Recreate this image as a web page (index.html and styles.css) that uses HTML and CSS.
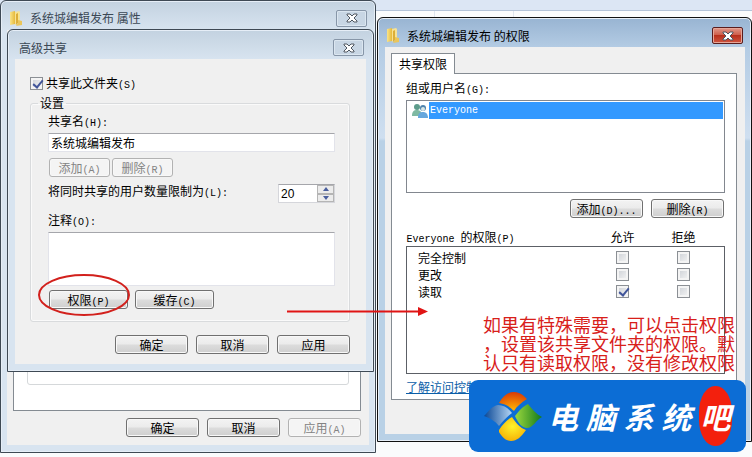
FILE: index.html
```html
<!DOCTYPE html>
<html lang="zh-CN">
<head>
    <meta charset="UTF-8">
    <meta name="viewport" content="width=device-width, initial-scale=1.0">
    <title>高级共享</title>
    <link rel="stylesheet" href="styles.css">
</head>
<body>

    <svg width="0" height="0" class="defs">
        <defs>
            <linearGradient id="gold" x1="0" x2="1"><stop offset="0" stop-color="#f9e48a"/><stop offset="1" stop-color="#e6b93a"/></linearGradient>
            <symbol id="folder" viewBox="0 0 13 15">
                <path d="M0 1l5-1v13l-5 1z" fill="url(#gold)"/>
                <path d="M5 1l4-1 1 1v9l-5 4z" fill="#f6e294"/>
                <path d="M6 3l2-1v10l-2 2z" fill="#dcae38"/>
                <path d="M8 9l4 1v4l-6 1 2-3z" fill="#ebc65a"/>
            </symbol>
            <symbol id="cross" viewBox="0 0 12 10">
                <path d="M1 1h3l2 2 2-2h3v1L8 5l3 3v1H8L6 7 4 9H1V8l3-3-3-3z" fill="#fff" stroke="#4e5660" stroke-width="1"/>
            </symbol>
        </defs>
    </svg>

    <div class="desktop">
        <div class="explorer"></div>
        <div class="columns"></div>

        <!-- properties window -->
        <section class="window props">
            <header class="titlebar">
                <svg class="folder"><use href="#folder"/></svg>
                <h1>系统城编辑发布 属性</h1>
                <button class="close" aria-label="关闭"><svg><use href="#cross"/></svg></button>
            </header>
            <div class="client">
                <div class="sheet"><div class="sheet-group"></div></div>
                <div class="actions">
                    <button class="btn">确定</button>
                    <button class="btn">取消</button>
                    <button class="btn" disabled>应用<span class="key">(A)</span></button>
                </div>
            </div>
        </section>

        <!-- advanced sharing -->
        <section class="window sharing">
            <header class="titlebar">
                <h1>高级共享</h1>
                <button class="close" aria-label="关闭"><svg><use href="#cross"/></svg></button>
            </header>
            <div class="client">
                <label class="share-check"><input type="checkbox" checked><span>共享此文件夹<span class="key">(S)</span></span></label>
                <fieldset>
                    <legend>设置</legend>
                    <label for="shareName">共享名<span class="key">(H):</span></label>
                    <input type="text" id="shareName" value="系统城编辑发布">
                    <div class="row small">
                        <button class="btn" disabled>添加<span class="key">(A)</span></button>
                        <button class="btn" disabled>删除<span class="key">(R)</span></button>
                    </div>
                    <div class="limit">
                        <label for="limit">将同时共享的用户数量限制为<span class="key">(L):</span></label>
                        <div class="spin">
                            <input type="text" id="limit" value="20">
                            <div class="arrows">
                                <button aria-label="增加"><svg viewBox="0 0 6 4"><path d="M0 4l3-4 3 4z"/></svg></button>
                                <button aria-label="减少"><svg viewBox="0 0 6 4"><path d="M0 0h6L3 4z"/></svg></button>
                            </div>
                        </div>
                    </div>
                    <label for="note">注释<span class="key">(O):</span></label>
                    <textarea id="note"></textarea>
                    <div class="row">
                        <button class="btn">权限<span class="key">(P)</span></button>
                        <button class="btn">缓存<span class="key">(C)</span></button>
                    </div>
                </fieldset>
                <div class="actions">
                    <button class="btn">确定</button>
                    <button class="btn">取消</button>
                    <button class="btn">应用</button>
                </div>
            </div>
        </section>

        <!-- permissions -->
        <section class="window perms">
            <header class="titlebar">
                <svg class="folder"><use href="#folder"/></svg>
                <h1>系统城编辑发布 的权限</h1>
                <button class="close" aria-label="关闭"><svg><use href="#cross"/></svg></button>
            </header>
            <div class="client">
                <button class="tab">共享权限</button>
                <div class="panel">
                    <p>组或用户名<span class="key">(G):</span></p>
                    <ul class="users">
                        <li>
                            <svg viewBox="0 0 16 16">
                                <circle cx="5" cy="4" r="3" fill="#5d9c8b"/>
                                <path d="M0 13c0-5 2-6 5-6s5 2 5 6z" fill="#7fb9a2"/>
                                <circle cx="11" cy="5" r="3" fill="#4d82ad"/>
                                <circle cx="11" cy="6" r="2" fill="#d8e6e4"/>
                                <path d="M6 15c0-5 2-6 5-6s5 2 5 6z" fill="#66a7dd"/>
                            </svg>
                            <span class="key">Everyone</span>
                        </li>
                    </ul>
                    <div class="actions">
                        <button class="btn">添加<span class="key">(D)...</span></button>
                        <button class="btn">删除<span class="key">(R)</span></button>
                    </div>
                    <table>
                        <thead>
                            <tr><th><span class="key">Everyone </span>的权限<span class="key">(P)</span></th><th>允许</th><th>拒绝</th></tr>
                        </thead>
                        <tbody>
                            <tr>
                                <td>完全控制</td>
                                <td><input type="checkbox" aria-label="完全控制 允许"></td>
                                <td><input type="checkbox" aria-label="完全控制 拒绝"></td>
                            </tr>
                            <tr>
                                <td>更改</td>
                                <td><input type="checkbox" aria-label="更改 允许"></td>
                                <td><input type="checkbox" aria-label="更改 拒绝"></td>
                            </tr>
                            <tr>
                                <td>读取</td>
                                <td><input type="checkbox" aria-label="读取 允许" checked></td>
                                <td><input type="checkbox" aria-label="读取 拒绝"></td>
                            </tr>
                            <tr class="blank"><td colspan="3"></td></tr>
                        </tbody>
                    </table>
                    <a href="#">了解访问控制</a>
                </div>
            </div>
        </section>

        <!-- red marks over the windows -->
        <svg class="marks" width="430" height="330" viewBox="0 0 430 330">
            <ellipse cx="84" cy="295" rx="45" ry="20" fill="none" stroke="#d2201c" stroke-width="2"/>
            <path d="M287 311.500h135" stroke="#e01414" stroke-width="2"/>
            <path d="M418 307l10 4.500-10 4.500z" fill="#e01414"/>
        </svg>
        <p class="tip">如果有特殊需要，可以点击权限，设置该共享文件夹的权限。默认只有读取权限，没有修改权限</p>

        <div class="banner">
            <svg viewBox="0 0 58 50">
                <defs>
                    <radialGradient id="r" cx=".5" cy=".9" r=".9"><stop offset="0" stop-color="#ffb000"/><stop offset="1" stop-color="#d93a06"/></radialGradient>
                    <linearGradient id="b"><stop offset="0" stop-color="#0a4795"/><stop offset="1" stop-color="#b5d5f3"/></linearGradient>
                    <linearGradient id="g"><stop offset="0" stop-color="#9bd83e"/><stop offset="1" stop-color="#127a1c"/></linearGradient>
                    <radialGradient id="y" cx=".5" cy=".4" r=".7"><stop offset="0" stop-color="#fff32b"/><stop offset="1" stop-color="#f5a800"/></radialGradient>
                </defs>
                <path d="M15 12C20 3 27-1 35 2c3 1 5 3 8 6-6 4-10 7-13 12-5-5-9-7-15-8z" fill="url(#r)"/>
                <path d="M0 25c5-5 8-10 14-11 6 0 10 3 14 8-4 3-9 8-13 13-4-5-9-8-15-10z" fill="url(#b)"/>
                <path d="M44 13c4 5 8 10 14 13-6 3-9 11-15 11-5 0-9-5-12-12 4-5 7-9 13-12z" fill="url(#g)"/>
                <path d="M28 26c4 6 8 11 14 13-5 7-9 11-15 11-5 0-9-4-12-9v-2c4-6 8-10 13-13z" fill="url(#y)"/>
            </svg>
            <div class="brand"><span>电</span><span>脑</span><span>系</span><span>统</span><span class="seal">吧</span></div>
        </div>
    </div>

</body>
</html>
```

FILE: styles.css
```css
* {
    box-sizing: border-box;
}

body {
    margin: 0;
    font-family: 'Noto Sans CJK SC', sans-serif;
    font-size: 12px;
    line-height: 16px;
    color: #000;
}

.defs {
    position: absolute;
}

.desktop {
    position: relative;
    min-height: 100vh;
    overflow: hidden;
    background: #fafbfc;
}

.explorer {
    height: 11px;
    background: #dce6f4;
    border-bottom: 1px solid #b4c3d8;
}

.columns {
    width: 80px;
    height: 8px;
    margin-left: 434px;
    border: solid #dfe5ee;
    border-width: 0 1px;
}

h1, p, ul {
    margin: 0;
    padding: 0;
    font-size: 12px;
    font-weight: normal;
}

input, textarea, button {
    font: inherit;
    margin: 0;
}

/* latin letters sit in half-width cells */
.key {
    font-family: 'Liberation Mono', monospace;
    font-size: 10px;
    line-height: 10px;
    white-space: pre;
}

/* windows */
.window {
    position: absolute;
    display: flex;
    flex-direction: column;
    border: 1px solid #3e4954;
    border-radius: 6px 6px 0 0;
    padding: 0 7px 7px;
    background: linear-gradient(#c3d2e0, #d8e4f0 30px);
    box-shadow: inset 0 0 0 1px #e6eef7;
}

.props {
    left: 0;
    top: 0;
    width: 50%;
    min-height: 453px;
    padding: 0 6px 7px;
}

.sharing {
    left: 7px;
    top: 29px;
    width: calc(50% - 9px);
}

.perms {
    left: 377px;
    right: 0;
    top: 17px;
    border-color: #111;
    padding: 0 6px 7px 7px;
    background: linear-gradient(#98b4d2, #b4cce4 30px, #cfdff0 120px, #b9d1e6 123px);
}

.titlebar {
    display: flex;
    align-items: center;
    height: 29px;
    padding: 6px 2px 0 4px;
    color: #3b4855;
}

.props .titlebar {
    padding: 5px 2px 0 3px;
}

.perms .titlebar {
    color: #000;
    padding-left: 2px;
}

.titlebar h1 {
    flex: 1;
}

.folder {
    width: 13px;
    height: 15px;
    margin-right: 7px;
}

.close {
    display: flex;
    align-items: center;
    justify-content: center;
    width: 31px;
    height: 17px;
    padding: 0;
    border: 1px solid #8796a8;
    border-radius: 2px;
    background: #c8d6e4;
    box-shadow: inset 0 0 0 1px #dbe6f0;
}

.perms .close {
    border-color: #5a1d1d;
    background: linear-gradient(#e0988a, #cf5f4c 45%, #b8301c 50%, #cf5540);
    box-shadow: inset 0 0 0 1px #e6a698;
}

.close svg {
    width: 12px;
    height: 10px;
}

.client {
    flex: 1;
    display: flex;
    flex-direction: column;
    background: #f0f0f0;
}

.sharing .client {
    padding: 16px 16px 10px 15px;
}

.props .client {
    padding: 0 8px 8px 6px;
}

.perms .client {
    padding: 6px 8px 34px 6px;
}

.sheet {
    flex: 1;
    display: flex;
    padding: 0 11px 25px 13px;
    border: 1px solid #848b92;
    background: #fff;
}

.sheet-group {
    flex: 1;
    border: 1px solid #d5d8da;
    border-radius: 3px;
}

.actions {
    display: flex;
    justify-content: flex-end;
    gap: 8px;
}

.props .actions {
    padding-top: 7px;
}

/* controls */
.btn {
    width: 73px;
    height: 19px;
    padding: 0;
    line-height: 16px;
    border: 1px solid #707070;
    border-radius: 3px;
    color: #000;
    background: linear-gradient(#f3f3f3, #ebebeb 48%, #dcdcdc 52%, #cfcfcf);
    box-shadow: inset 0 0 0 1px #f8f8f8;
}

.btn:disabled {
    border-color: #b2b2b2;
    color: #838383;
    background: #f4f4f4;
}

input[type="checkbox"] {
    appearance: none;
    display: block;
    width: 13px;
    height: 13px;
    border: 1px solid #8b8f94;
    background: linear-gradient(135deg, #cbcfd5, #f6f6f6);
    box-shadow: inset 0 0 0 2px #f4f4f4;
}

input[type="checkbox"]:checked::after {
    content: "";
    display: block;
    width: 4px;
    height: 8px;
    margin: 0 0 0 4px;
    border: solid #41559a;
    border-width: 0 2px 2px 0;
    transform: rotate(40deg);
}

input[type="text"], textarea {
    display: block;
    width: 100%;
    border: 1px solid #e2e3ea;
    border-top-color: #a5a6ab;
    background: #fff;
    color: #000;
    outline: none;
}

input[type="text"] {
    height: 19px;
    padding: 0 2px;
}

textarea {
    height: 54px;
    resize: none;
}

.share-check {
    display: flex;
    align-items: center;
    gap: 3px;
}

fieldset {
    min-width: 0;
    margin: 4px 0 13px;
    padding: 2px 14px 12px 17px;
    border: 1px solid #d9dbdd;
    border-radius: 3px;
    box-shadow: inset 0 0 0 1px #fafafa;
}

legend {
    margin-left: -10px;
    padding: 0 2px;
}

fieldset label {
    display: block;
    padding-bottom: 4px;
}

.row {
    display: flex;
    gap: 7px;
    margin: 4px 0 0 1px;
}

.row .btn {
    width: 79px;
}

.small {
    gap: 2px;
    margin-top: 6px;
}

.small .btn {
    width: 61px;
}

.limit {
    display: flex;
    justify-content: space-between;
    align-items: flex-start;
    margin: 6px 0 9px;
}

.spin {
    display: flex;
    width: 57px;
    height: 19px;
    margin-top: 1px;
    border: 1px solid #d5d6db;
    border-top-color: #a5a6ab;
    background: #fff;
}

.spin input[type="text"] {
    flex: 1;
    min-width: 0;
    height: 17px;
    border: 0;
    font-family: 'Liberation Sans', sans-serif;
}

.arrows {
    display: flex;
    flex-direction: column;
    width: 17px;
}

.arrows button {
    flex: 1;
    display: flex;
    align-items: center;
    justify-content: center;
    padding: 0;
    border: 1px solid #b5b5b5;
    background: #ececec;
}

.arrows svg {
    width: 6px;
    height: 4px;
    fill: #4a5f9e;
}

/* permissions */
.tab {
    align-self: flex-start;
    height: 21px;
    margin-bottom: -1px;
    padding: 0 7px;
    border: 1px solid #848b92;
    border-bottom: 0;
    background: #fff;
    color: #000;
    z-index: 1;
}

.panel {
    padding: 6px 11px 4px 14px;
    border: 1px solid #848b92;
    background: #fff;
}

.users {
    height: 93px;
    margin: 4px 0 6px;
    padding: 1px;
    border: 1px solid #82878f;
    list-style: none;
}

.users li {
    display: flex;
    align-items: center;
    padding-left: 4px;
    height: 17px;
}

.users svg {
    width: 16px;
    height: 16px;
}

.users .key {
    flex: 1;
    margin-left: 1px;
    padding-left: 1px;
    line-height: 17px;
    color: #fff;
    background: #3399ff;
}

.panel .actions {
    padding-right: 1px;
}

table {
    width: 100%;
    margin-top: 10px;
    border-collapse: collapse;
    table-layout: fixed;
}

th, td {
    padding: 0;
    height: 17px;
    font-weight: normal;
    text-align: center;
}

th {
    height: 18px;
}

th:first-child, td:first-child {
    text-align: left;
}

td:first-child {
    padding-left: 11px;
}

th:nth-child(2) {
    width: 60px;
}

th:nth-child(3) {
    width: 72px;
}

th:nth-child(3), td:nth-child(3) {
    padding-right: 10px;
}

tbody {
    border: 1px solid #5c6066;
}

tbody tr:first-child td {
    height: 20px;
    padding-top: 3px;
}

td input[type="checkbox"] {
    margin: 0 auto;
}

.blank td {
    height: 73px;
}

.panel a {
    display: inline-block;
    margin-top: 5px;
    color: #0b5ea8;
}

/* marks and banner lie over the windows */
.marks {
    position: absolute;
    left: 0;
    top: 0;
    pointer-events: none;
}

.tip {
    position: absolute;
    left: 483px;
    top: 315px;
    width: 252px;
    font-size: 18px;
    line-height: 19px;
    line-break: anywhere;
    color: #d8201a;
}

.banner {
    position: absolute;
    left: 469px;
    right: 6px;
    top: 380px;
    height: 72px;
    display: flex;
    align-items: center;
    gap: 6px;
    padding: 0 14px 0 15px;
    border-radius: 9px;
    background: #0c6dd5;
}

.banner > svg {
    width: 58px;
    height: 50px;
}

.brand {
    flex: 1;
    display: flex;
    align-items: center;
    justify-content: space-between;
    font-size: 30px;
    line-height: 60px;
    font-weight: bold;
    font-style: italic;
    color: #fff;
}

.seal {
    width: 33px;
    text-align: center;
    border-radius: 16px / 26px;
    background: #f3200d;
}
```
